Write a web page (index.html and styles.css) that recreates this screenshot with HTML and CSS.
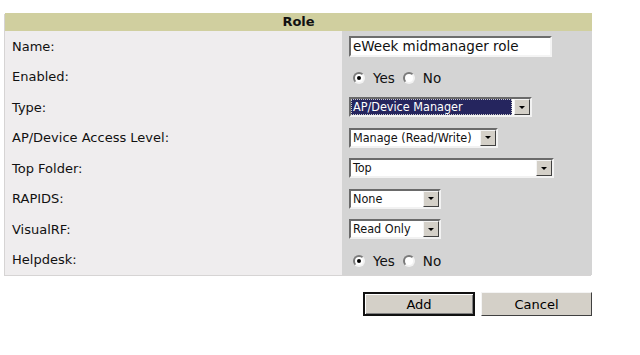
FILE: index.html
```html
<!DOCTYPE html>
<html lang="en">
<head>
  <meta charset="UTF-8">
  <title>Role</title>
  <link rel="stylesheet" href="styles.css">
</head>
<body>
  <div class="panel">
    <div class="panel-head">Role</div>
    <div class="rows">
      <div class="lbl">Name:</div>
      <div class="fld"><div class="textbox">eWeek midmanager role</div></div>

      <div class="lbl">Enabled:</div>
      <div class="fld radios">
        <span class="radio on"></span><span class="rtext">Yes</span>
        <span class="radio"></span><span class="rtext">No</span>
      </div>

      <div class="lbl">Type:</div>
      <div class="fld">
        <div class="combo w-type"><span class="val sel">AP/Device Manager</span><span class="arrow"></span></div>
      </div>

      <div class="lbl">AP/Device Access Level:</div>
      <div class="fld">
        <div class="combo w-access"><span class="val">Manage (Read/Write)</span><span class="arrow"></span></div>
      </div>

      <div class="lbl">Top Folder:</div>
      <div class="fld">
        <div class="combo w-folder"><span class="val">Top</span><span class="arrow"></span></div>
      </div>

      <div class="lbl">RAPIDS:</div>
      <div class="fld">
        <div class="combo w-small"><span class="val">None</span><span class="arrow"></span></div>
      </div>

      <div class="lbl">VisualRF:</div>
      <div class="fld">
        <div class="combo w-small"><span class="val">Read Only</span><span class="arrow"></span></div>
      </div>

      <div class="lbl">Helpdesk:</div>
      <div class="fld radios">
        <span class="radio on"></span><span class="rtext">Yes</span>
        <span class="radio"></span><span class="rtext">No</span>
      </div>
    </div>
  </div>

  <div class="actions">
    <button type="button" class="btn default">Add</button>
    <button type="button" class="btn">Cancel</button>
  </div>
</body>
</html>
```

FILE: styles.css
```css
body { margin: 0; background: #fff; font-family: "DejaVu Sans", Tahoma, sans-serif; font-size: 13px; color: #111; }

.panel { margin: 13px 0 0 5px; width: 587px; background: #d4d4d4; box-shadow: -1px 1px 0 #d6d4d4; }
.panel-head { height: 18px; line-height: 18px; background: #d0cf9f; text-align: center; font-weight: bold; }
.rows { display: grid; grid-template-columns: 337px 1fr; grid-auto-rows: 30.5px; }
.lbl { background: #efedee; padding-left: 7px; display: flex; align-items: center; }
.fld { display: flex; align-items: center; padding-left: 7px; }

.textbox { width: 197px; height: 17px; line-height: 17px; padding-left: 2px; background: #fff;
  border: 2px solid; border-color: #6d6d6d #f4f4f4 #f4f4f4 #6d6d6d; font-size: 13.5px; }

.radios { padding-left: 11px; padding-top: 2px; }
.radio { width: 12px; height: 12px; border-radius: 50%; background: #fff; box-sizing: border-box;
  border: 2px solid; border-color: #7a7a7a #f2f2f2 #f2f2f2 #7a7a7a; display: flex; align-items: center; justify-content: center; }
.radio.on::after { content: ""; width: 4px; height: 4px; border-radius: 50%; background: #000; }
.rtext { margin: 0 8px 0 8px; font-size: 13.5px; }

.combo { height: 16px; display: flex; background: #fff; border: 2px solid; border-color: #6a6a6a #f2f2f2 #f2f2f2 #6a6a6a;
  font-family: "DejaVu Sans Condensed", "DejaVu Sans", sans-serif; font-size: 12.5px; }
.combo .val { flex: 1; line-height: 16px; padding-left: 2px; white-space: nowrap; overflow: hidden; }
.combo .val.sel { background: #25255e; color: #fff; outline: 1px dotted #c8c8c8; outline-offset: -1px; }
.combo .arrow { width: 16px; background: #d4d0c8; box-sizing: border-box; border: 1px solid; border-color: #f4f4f4 #404040 #404040 #f4f4f4;
  display: flex; align-items: center; justify-content: center; margin-left: 2px; }
.combo .arrow::after { content: ""; border-left: 3px solid transparent; border-right: 3px solid transparent; border-top: 3px solid #000; }
.w-type { width: 179px; }
.w-access { width: 145px; }
.w-folder { width: 201px; }
.w-small { width: 88px; }

.actions { width: 592px; display: flex; justify-content: flex-end; gap: 6px; margin-top: 17px; }
.btn { height: 24px; width: 111px; background: #d4d0c8; font-family: inherit; font-size: 13px; color: #000; padding: 0;
  border: 1px solid; border-color: #f4f4f4 #404040 #404040 #f4f4f4; }
.btn.default { width: 112px; border-width: 2px; border-color: #111; box-shadow: inset 1px 1px 0 #fff, inset -1px -1px 0 #808080; }
```
